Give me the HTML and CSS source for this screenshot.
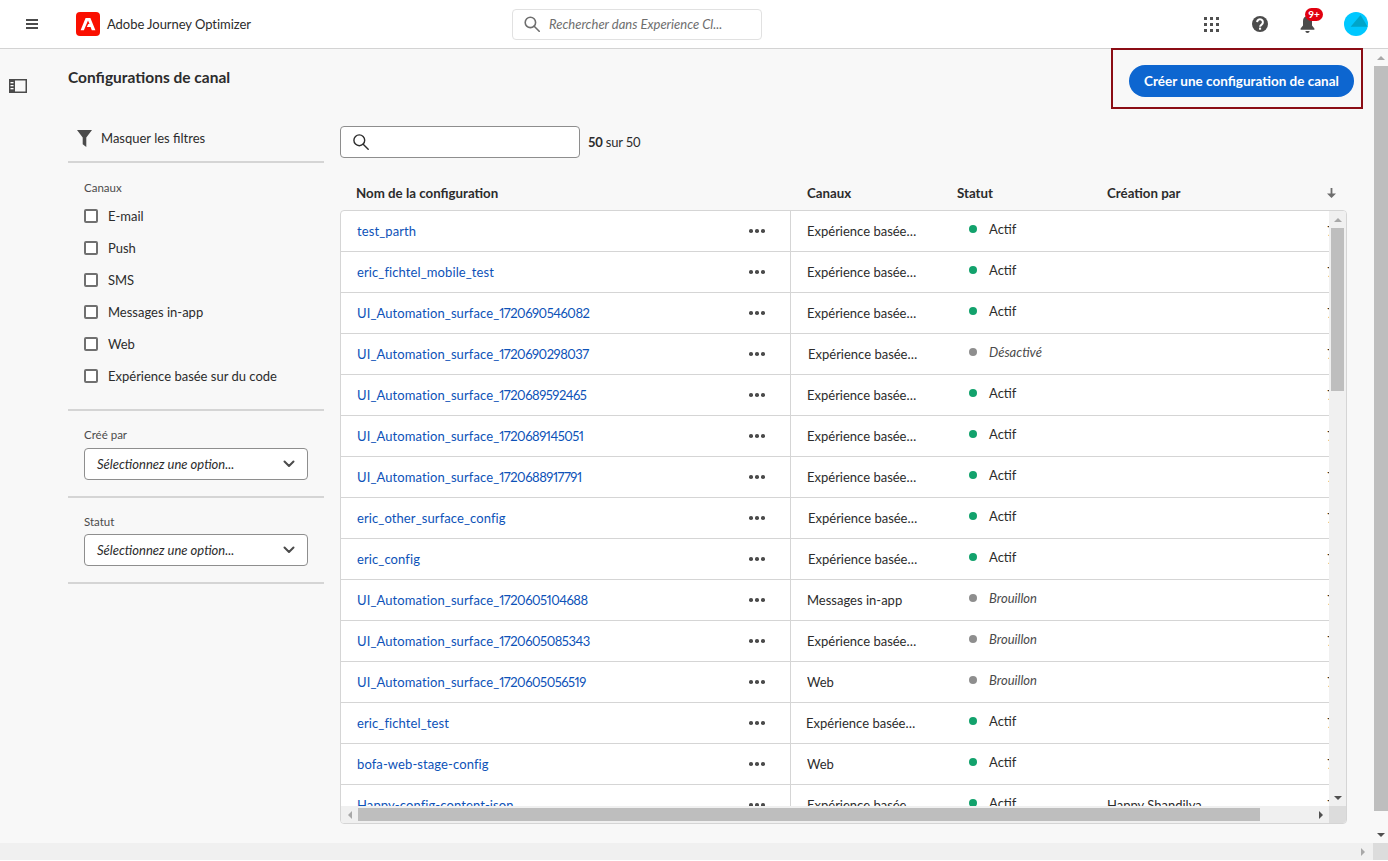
FILE: index.html
```html
<!DOCTYPE html>
<html lang="fr">
<head>
<meta charset="utf-8">
<title>Configurations de canal</title>
<link rel="stylesheet" href="styles.css">
</head>
<body>
<div class="app">
  <header class="topbar">
    <div class="top-left">
      <svg class="burger" width="12" height="10" viewBox="0 0 12 10"><rect width="12" height="2" y="0"/><rect width="12" height="2" y="4"/><rect width="12" height="2" y="8"/></svg>
      <svg class="logo" width="24" height="24" viewBox="0 0 24 24"><rect width="24" height="24" rx="4" fill="#fa0f00"/><path d="M9.6 6h4.8l5 12.2h-3.6l-1.2-3.2h-3.8l1.5-2.9h1.2L12 8.6 7.9 18.2H4.6z" fill="#fff"/></svg>
      <span class="product">Adobe Journey Optimizer</span>
    </div>
    <div class="global-search">
      <svg width="16" height="16" viewBox="0 0 16 16" fill="none" stroke="#6e6e6e" stroke-width="1.6"><circle cx="6.4" cy="6.4" r="5.2"/><path d="M10.2 10.2l5 5" stroke-linecap="round"/></svg>
      <span>Rechercher dans Experience Cl...</span>
    </div>
    <div class="top-right">
      <svg class="apps" width="15" height="15" viewBox="0 0 15 15" fill="#505050"><rect x="0" y="0" width="3" height="3"/><rect x="6" y="0" width="3" height="3"/><rect x="12" y="0" width="3" height="3"/><rect x="0" y="6" width="3" height="3"/><rect x="6" y="6" width="3" height="3"/><rect x="12" y="6" width="3" height="3"/><rect x="0" y="12" width="3" height="3"/><rect x="6" y="12" width="3" height="3"/><rect x="12" y="12" width="3" height="3"/></svg>
      <svg class="help" width="16" height="16" viewBox="0 0 16 16"><circle cx="8" cy="8" r="8" fill="#4b4b4b"/><path d="M5.1 6.1a2.9 2.9 0 1 1 4.5 2.5c-.9.6-1.5 1-1.5 2.1" fill="none" stroke="#fff" stroke-width="2"/><rect x="7" y="11.6" width="2.1" height="2.1" fill="#fff"/></svg>
      <div class="bell-wrap">
        <svg width="15" height="19" viewBox="0 0 15 19" fill="#4b4b4b"><path d="M7.5 1C4.6 1 3 3.2 3 6v4.5L.6 13.6v1.2h13.8v-1.2L12 10.5V6c0-2.8-1.6-5-4.5-5z"/><path d="M5.4 16h4.2c0 1.2-.9 2-2.1 2s-2.1-.8-2.1-2z"/></svg>
        <span class="badge">9+</span>
      </div>
      <svg class="avatar" width="24" height="24" viewBox="0 0 24 24"><circle cx="12" cy="12" r="12" fill="#00c8ff"/><path d="M16.6 3L23.7 14.7H6.6z" fill="#00a5c9"/></svg>
    </div>
  </header>

  <div class="workspace">
    <main class="main">
      <nav class="rail">
        <svg width="18" height="14" viewBox="0 0 18 14"><rect x="0.75" y="0.75" width="16.5" height="12.5" fill="none" stroke="#4b4b4b" stroke-width="1.5"/><rect x="0" y="0" width="6" height="14" fill="#4b4b4b"/><rect x="1.5" y="3" width="3" height="1.3" fill="#fff"/><rect x="1.5" y="6" width="3" height="1.3" fill="#fff"/><rect x="1.5" y="9" width="3" height="1.3" fill="#fff"/></svg>
      </nav>
      <div class="content">
        <div class="page-head">
          <h1>Configurations de canal</h1>
          <div class="cta-frame"><button class="cta">Créer une configuration de canal</button></div>
        </div>
        <div class="columns">
          <aside class="filters">
            <div class="filter-toggle">
              <svg width="15" height="17" viewBox="0 0 15 17" fill="#4b4b4b"><path d="M0 0h15L9.3 7.5V17L5.7 14.2V7.5z"/></svg>
              <span>Masquer les filtres</span>
            </div>
            <section class="filter-group channels">
              <div class="group-label">Canaux</div>
              <label class="check"><i></i>E-mail</label>
              <label class="check"><i></i>Push</label>
              <label class="check"><i></i>SMS</label>
              <label class="check"><i></i>Messages in-app</label>
              <label class="check"><i></i>Web</label>
              <label class="check"><i></i>Expérience basée sur du code</label>
            </section>
            <section class="filter-group">
              <div class="group-label">Créé par</div>
              <div class="select"><span>Sélectionnez une option...</span><svg width="12" height="8" viewBox="0 0 12 8" fill="none" stroke="#4b4b4b" stroke-width="2" stroke-linecap="round" stroke-linejoin="round"><path d="M1.5 1.5L6 6l4.5-4.5"/></svg></div>
            </section>
            <section class="filter-group last">
              <div class="group-label">Statut</div>
              <div class="select"><span>Sélectionnez une option...</span><svg width="12" height="8" viewBox="0 0 12 8" fill="none" stroke="#4b4b4b" stroke-width="2" stroke-linecap="round" stroke-linejoin="round"><path d="M1.5 1.5L6 6l4.5-4.5"/></svg></div>
            </section>
          </aside>
          <section class="list">
            <div class="list-tools">
              <div class="list-search"><svg width="16" height="16" viewBox="0 0 16 16" fill="none" stroke="#2c2c2c" stroke-width="1.4"><circle cx="6.3" cy="6.3" r="5.4"/><path d="M10.2 10.2l5 5" stroke-linecap="round"/></svg></div>
              <div class="count"><b>50</b> sur 50</div>
            </div>
            <div class="head-row">
              <span>Nom de la configuration</span><span>Canaux</span><span>Statut</span><span>Création par</span>
              <svg width="9" height="10" viewBox="0 0 9 10" fill="#6e6e6e"><path d="M3.6 0h1.8v5.6H9L4.5 10 0 5.6h3.6z"/></svg>
            </div>
            <div class="table">
              <div class="rows">
                <div class="row"><a class="name">test_parth</a><span class="dots"><i></i><i></i><i></i></span><span class="chan"><span>Expérience basée sur du code</span></span><span class="status on">Actif</span><span class="creator"></span><span class="date">7</span></div>
                <div class="row"><a class="name">eric_fichtel_mobile_test</a><span class="dots"><i></i><i></i><i></i></span><span class="chan"><span>Expérience basée sur du code</span></span><span class="status on">Actif</span><span class="creator"></span><span class="date">7</span></div>
                <div class="row"><a class="name">UI_Automation_surface_<span class="num">1720690546082</span></a><span class="dots"><i></i><i></i><i></i></span><span class="chan"><span>Expérience basée sur du code</span></span><span class="status on">Actif</span><span class="creator"></span><span class="date">7</span></div>
                <div class="row"><a class="name">UI_Automation_surface_<span class="num">1720690298037</span></a><span class="dots"><i></i><i></i><i></i></span><span class="chan nudge"><span>Expérience basée sur du code</span></span><span class="status off">Désactivé</span><span class="creator"></span><span class="date">7</span></div>
                <div class="row"><a class="name">UI_Automation_surface_<span class="num">1720689592465</span></a><span class="dots"><i></i><i></i><i></i></span><span class="chan"><span>Expérience basée sur du code</span></span><span class="status on">Actif</span><span class="creator"></span><span class="date">7</span></div>
                <div class="row"><a class="name">UI_Automation_surface_<span class="num">1720689145051</span></a><span class="dots"><i></i><i></i><i></i></span><span class="chan"><span>Expérience basée sur du code</span></span><span class="status on">Actif</span><span class="creator"></span><span class="date">7</span></div>
                <div class="row"><a class="name">UI_Automation_surface_<span class="num">1720688917791</span></a><span class="dots"><i></i><i></i><i></i></span><span class="chan"><span>Expérience basée sur du code</span></span><span class="status on">Actif</span><span class="creator"></span><span class="date">7</span></div>
                <div class="row"><a class="name">eric_other_surface_config</a><span class="dots"><i></i><i></i><i></i></span><span class="chan nudge"><span>Expérience basée sur du code</span></span><span class="status on">Actif</span><span class="creator"></span><span class="date">7</span></div>
                <div class="row"><a class="name">eric_config</a><span class="dots"><i></i><i></i><i></i></span><span class="chan nudge"><span>Expérience basée sur du code</span></span><span class="status on">Actif</span><span class="creator"></span><span class="date">7</span></div>
                <div class="row"><a class="name">UI_Automation_surface_<span class="num">1720605104688</span></a><span class="dots"><i></i><i></i><i></i></span><span class="chan"><span>Messages in-app</span></span><span class="status off">Brouillon</span><span class="creator"></span><span class="date">7</span></div>
                <div class="row"><a class="name">UI_Automation_surface_<span class="num">1720605085343</span></a><span class="dots"><i></i><i></i><i></i></span><span class="chan"><span>Expérience basée sur du code</span></span><span class="status off">Brouillon</span><span class="creator"></span><span class="date">7</span></div>
                <div class="row"><a class="name">UI_Automation_surface_<span class="num">1720605056519</span></a><span class="dots"><i></i><i></i><i></i></span><span class="chan"><span>Web</span></span><span class="status off">Brouillon</span><span class="creator"></span><span class="date">7</span></div>
                <div class="row"><a class="name">eric_fichtel_test</a><span class="dots"><i></i><i></i><i></i></span><span class="chan back"><span>Expérience basée sur du code</span></span><span class="status on">Actif</span><span class="creator"></span><span class="date">7</span></div>
                <div class="row"><a class="name">bofa-web-stage-config</a><span class="dots"><i></i><i></i><i></i></span><span class="chan"><span>Web</span></span><span class="status on">Actif</span><span class="creator"></span><span class="date">7</span></div>
                <div class="row"><a class="name">Happy-config-content-json</a><span class="dots"><i></i><i></i><i></i></span><span class="chan"><span>Expérience basée sur du code</span></span><span class="status on">Actif</span><span class="creator">Happy Shandilya</span><span class="date">7</span></div>
              </div>
              <div class="sb-v inner"><b class="arrow up"></b><div class="track"><div class="thumb inner-thumb"></div></div><b class="arrow down"></b></div>
              <div class="sb-h inner"><b class="arrow left"></b><div class="track"><div class="thumb inner-hthumb"></div></div><b class="arrow right"></b></div>
              <div class="corner"></div>
            </div>
          </section>
        </div>
      </div>
      <div class="sb-v page"><b class="arrow up faint"></b><div class="track"><div class="thumb page-thumb"></div></div><b class="arrow down"></b></div>
    </main>
    <div class="page-bottom">
      <div class="sb-h page"><b class="arrow left faint"></b><div class="track"></div><b class="arrow right faint"></b></div>
      <div class="corner page-corner"></div>
    </div>
  </div>
</div>
</body>
</html>
```
FILE: styles.css
```css
* { box-sizing: border-box; }
html, body { margin: 0; height: 100%; overflow: hidden; }
body { font-family: "Lato", "Open Sans", sans-serif; color: #2c2c2c; font-size: 13px; background: #f8f8f8; }
.app { width: 1388px; height: 861px; display: flex; flex-direction: column; }

/* top bar */
.topbar { height: 49px; flex: none; background: #fff; border-bottom: 1px solid #d3d3d3; display: grid; grid-template-columns: 512px 250px 1fr; align-items: center; }
.top-left { display: flex; align-items: center; padding-left: 26px; }
.burger { fill: #4b4b4b; margin-right: 38px; }
.logo { margin-right: 7px; }
.product { font-size: 13px; letter-spacing: -0.05px; color: #2c2c2c; }
.global-search { height: 31px; border: 1px solid #e1e1e1; border-radius: 4px; display: flex; align-items: center; gap: 9px; padding-left: 11px; color: #6e6e6e; font-style: italic; font-size: 13px; }
.top-right { display: flex; align-items: center; justify-content: flex-end; padding-right: 20px; }
.apps { margin-right: 33px; }
.help { margin-right: 32px; }
.bell-wrap { position: relative; width: 15px; height: 19px; margin-right: 29px; }
.badge { position: absolute; left: 5px; top: -7px; width: 18px; height: 13px; border-radius: 7px; background: #e1000f; color: #fff; font-size: 10px; font-weight: 700; line-height: 13px; text-align: center; }

/* workspace */
.workspace { flex: 1; display: flex; flex-direction: column; min-height: 0; }
.main { flex: 1; display: grid; grid-template-columns: 68px 1fr 15px; min-height: 0; }
.rail { padding: 30px 0 0 9px; }
.content { min-width: 0; padding-right: 26px; }
.page-head { height: 77px; display: flex; justify-content: space-between; align-items: flex-start; }
h1 { margin: 19px 0 0; font-size: 15.5px; line-height: 18px; font-weight: 700; color: #2c2c2c; }
.cta-frame { border: 2px solid #8b0d15; margin: -1px -16px 0 0; padding: 15px 7px 9px 16px; width: 252px; height: 61px; }
.cta { display: block; width: 225px; height: 32px; border: 0; border-radius: 16px; background: #0d66d0; color: #fff; font: 700 13.5px "Lato", sans-serif; padding: 0; }
.columns { display: grid; grid-template-columns: 256px 1007px; column-gap: 16px; }

/* filters */
.filters { font-size: 13px; }
.filter-toggle { height: 37px; display: flex; align-items: center; gap: 9px; padding: 0 0 11px 9px; border-bottom: 2px solid #d5d5d5; }
.filter-group { padding: 17px 16px 16px; border-bottom: 2px solid #d5d5d5; }
.group-label { font-size: 11.5px; line-height: 14px; color: #4b4b4b; margin-bottom: 6px; }
.channels { padding: 18px 16px 17px; }
.channels .group-label { margin-bottom: 5px; }
.last .group-label { margin-bottom: 5px; }
.check { display: flex; align-items: center; gap: 10px; height: 32px; font-size: 13px; color: #2c2c2c; }
.check i { width: 14px; height: 14px; border: 2px solid #707070; border-radius: 2px; background: #fff; }
.select { width: 224px; height: 32px; border: 1px solid #8e8e8e; border-radius: 4px; background: #fff; display: flex; align-items: center; justify-content: space-between; padding: 0 12px; font-style: italic; font-size: 13px; }

/* list */
.list-tools { height: 32px; display: flex; align-items: center; gap: 8px; }
.list-search { width: 240px; height: 32px; border: 1px solid #8e8e8e; border-radius: 4px; background: #fff; padding: 7px 0 0 12px; }
.count { font-size: 13px; letter-spacing: -0.2px; }
.head-row { height: 52px; display: grid; grid-template-columns: 451px 150px 150px 220px 1fr; align-items: center; padding: 17px 0 0 16px; font-weight: 700; font-size: 13.3px; }
.table { height: 614px; width: 1007px; background: #fff; border: 1px solid #d5d5d5; border-radius: 4px; display: grid; grid-template-columns: 988px 17px; grid-template-rows: 595px 17px; overflow: hidden; }
.rows { overflow: hidden; }
.row { height: 41px; border-bottom: 1px solid #d5d5d5; display: grid; grid-template-columns: 399px 51px 166px 150px 220px 1fr; align-items: center; overflow: hidden; }
.name { color: #0d52b8; padding-left: 16px; font-size: 13px; letter-spacing: 0.1px; font-variant-numeric: proportional-nums; white-space: nowrap; }
.num { letter-spacing: -0.5px; }
.dots { height: 40px; border-right: 1px solid #d5d5d5; display: flex; align-items: center; gap: 2.5px; padding-left: 9px; }
.dots i { width: 3.6px; height: 3.6px; border-radius: 50%; background: #4b4b4b; }
.chan { padding-left: 16px; display: block; min-width: 0; }
.chan span { display: block; max-width: 112px; white-space: nowrap; overflow: hidden; text-overflow: ellipsis; }
.chan.nudge { padding-left: 17px; }
.chan.back { padding-left: 15px; }
.status { display: flex; align-items: center; gap: 12px; padding: 0 0 4px 12px; }
.status::before { content: ""; width: 8px; height: 8px; border-radius: 50%; }
.status.on::before { background: #12a26c; }
.status.off { font-style: italic; color: #4b4b4b; }
.status.off::before { background: #8e8e8e; }
.creator { white-space: nowrap; }
.date { white-space: nowrap; }

/* scrollbars */
.sb-v { display: flex; flex-direction: column; background: #f0f0f0; }
.sb-h { display: flex; background: #f0f0f0; }
.track { flex: 1; min-width: 0; min-height: 0; }
.thumb { background: #bebebe; }
.arrow { flex: none; display: flex; align-items: center; justify-content: center; }
.sb-v .arrow { height: 17px; }
.sb-h .arrow { width: 17px; }
.arrow::before { content: ""; border: 4px solid transparent; }
.arrow.up::before { border-top: 0; border-left-width: 4.5px; border-right-width: 4.5px; border-bottom: 4px solid #a8a8a8; }
.arrow.down::before { border-bottom: 0; border-left-width: 4.5px; border-right-width: 4.5px; border-top: 4px solid #505050; }
.arrow.left::before { border-left: 0; border-right: 4px solid #a8a8a8; }
.arrow.right::before { border-right: 0; border-left: 4px solid #505050; }
.arrow.right.faint::before { border-left-color: #a8a8a8; }
.arrow.left.faint::before { border-right-color: transparent; }
.inner-thumb { width: 13px; height: 163px; margin: 0 auto; }
.sb-h .track { display: flex; align-items: center; }
.inner-hthumb { width: 902px; height: 13px; }
.corner { background: #dcdcdc; }
.sb-v.page { background: #f8f8f8; }
.page-thumb { width: 14px; height: 745px; margin: 0 auto; }
.page-bottom { height: 18px; flex: none; display: grid; grid-template-columns: 1fr 15px; background: #fff; }
.sb-h.page { height: 17px; padding-right: 2px; }
.page-corner { height: 17px; }
```
